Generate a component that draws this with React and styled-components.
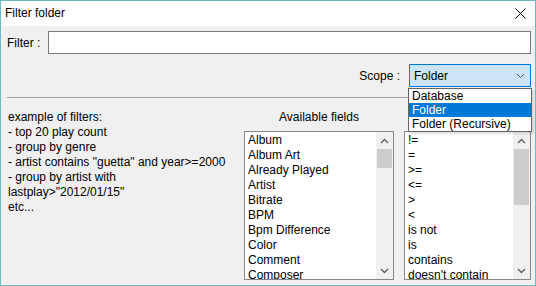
import styled, { createGlobalStyle } from 'styled-components';

const GlobalStyle = createGlobalStyle`
  html, body {
    margin: 0;
    padding: 0;
    background: #f0f0f0;
  }
  body {
    font-family: 'Liberation Sans', Arial, sans-serif;
    font-size: 12px;
    color: #000;
  }
`;

const Window = styled.div`
  width: 536px;
  height: 286px;
  box-sizing: border-box;
  border: 1px solid #6fb9c6;
  display: flex;
  flex-direction: column;
  background: #f0f0f0;
`;

const TitleBar = styled.div`
  height: 25px;
  flex: none;
  background: #fff;
  display: flex;
  align-items: center;
  justify-content: space-between;
  padding: 0 9px 0 4px;
  line-height: 15px;
`;

const Body = styled.div`
  flex: 1;
  display: flex;
  flex-direction: column;
  padding: 5px 4px 5px 6px;
  min-height: 0;
`;

const FilterRow = styled.div`
  display: flex;
  align-items: center;
  height: 23px;
`;

const Label = styled.span`
  width: ${(p) => (p.$w ? `${p.$w}px` : 'auto')};
  flex: none;
  white-space: nowrap;
`;

const TextInput = styled.div`
  flex: 1;
  height: 23px;
  box-sizing: border-box;
  border: 1px solid #7a7a7a;
  background: #fff;
`;

const ScopeRow = styled.div`
  display: flex;
  justify-content: flex-end;
  align-items: center;
  gap: 9px;
  margin-top: 10px;
  height: 23px;
`;

const ComboWrap = styled.div`
  position: relative;
  width: 122px;
  height: 23px;
`;

const Combo = styled.div`
  height: 100%;
  box-sizing: border-box;
  border: 1px solid #0078d7;
  background: #cce4f7;
  display: flex;
  align-items: center;
  justify-content: space-between;
  padding: 0 5px 0 4px;
`;

const Popup = styled.div`
  position: absolute;
  top: 24px;
  left: -1px;
  width: 124px;
  box-sizing: border-box;
  border: 1px solid #646464;
  background: #fff;
  box-shadow: 2px 2px 2px rgba(0, 0, 0, 0.12);
  z-index: 2;
`;

const PopupItem = styled.div`
  height: 14px;
  line-height: 14px;
  padding-left: 3px;
  background: ${(p) => (p.$active ? '#0078d7' : 'transparent')};
  color: ${(p) => (p.$active ? '#fff' : '#000')};
`;

const Separator = styled.div`
  height: 1px;
  background: #a0a0a0;
  margin-top: 10px;
  margin-right: 2px;
`;

const Lower = styled.div`
  flex: 1;
  min-height: 0;
  display: grid;
  grid-template-columns: 1fr 150px 127px;
  grid-template-rows: 15px 1fr;
  column-gap: 10px;
  row-gap: 6px;
  padding-top: 12px;
`;

const Examples = styled.div`
  grid-row: 1 / span 2;
  line-height: 15px;
  padding-left: 1px;
`;

const Heading = styled.div`
  text-align: center;
  line-height: 15px;
`;

const ListBox = styled.div`
  grid-row: 2;
  grid-column: ${(p) => p.$col};
  box-sizing: border-box;
  border: 1px solid #828790;
  background: #fff;
  display: flex;
  min-height: 0;
  overflow: hidden;
`;

const Items = styled.div`
  flex: 1;
  padding: 1px 0 0 3px;
  overflow: hidden;
`;

const Item = styled.div`
  height: 15px;
  line-height: 15px;
  white-space: nowrap;
`;

const ScrollBar = styled.div`
  width: 17px;
  flex: none;
  background: #f0f0f0;
  display: flex;
  flex-direction: column;
`;

const Arrow = styled.div`
  height: 17px;
  flex: none;
  display: flex;
  align-items: center;
  justify-content: center;
`;

const Track = styled.div`
  flex: 1;
`;

const Thumb = styled.div`
  height: ${(p) => p.$h}px;
  margin: 0 1px;
  background: #cdcdcd;
`;

const Chevron = ({ up, color = '#606060', w = 1.4 }) => (
  <svg width="9" height="6" viewBox="0 0 9 6">
    <path
      d={up ? 'M1 5 L4.5 1.5 L8 5' : 'M1 1 L4.5 4.5 L8 1'}
      fill="none"
      stroke={color}
      strokeWidth={w}
    />
  </svg>
);

const CloseIcon = () => (
  <svg width="11" height="11" viewBox="0 0 11 11">
    <path d="M0.5 0.5 L10.5 10.5 M10.5 0.5 L0.5 10.5" stroke="#000" strokeWidth="1" />
  </svg>
);

const fields = [
  'Album',
  'Album Art',
  'Already Played',
  'Artist',
  'Bitrate',
  'BPM',
  'Bpm Difference',
  'Color',
  'Comment',
  'Composer',
];

const operators = ['!=', '=', '>=', '<=', '>', '<', 'is not', 'is', 'contains', "doesn't contain"];

const List = ({ col, items, thumb }) => (
  <ListBox $col={col}>
    <Items>
      {items.map((it) => (
        <Item key={it}>{it}</Item>
      ))}
    </Items>
    <ScrollBar>
      <Arrow>
        <Chevron up />
      </Arrow>
      <Track>
        <Thumb $h={thumb} />
      </Track>
      <Arrow>
        <Chevron />
      </Arrow>
    </ScrollBar>
  </ListBox>
);

export default function App() {
  return (
    <>
      <GlobalStyle />
      <Window>
        <TitleBar>
          <span>Filter folder</span>
          <CloseIcon />
        </TitleBar>
        <Body>
          <FilterRow>
            <Label $w={41}>Filter :</Label>
            <TextInput />
          </FilterRow>
          <ScopeRow>
            <Label>Scope :</Label>
            <ComboWrap>
              <Combo>
                <span>Folder</span>
                <Chevron color="#555" w={1} />
              </Combo>
              <Popup>
                <PopupItem>Database</PopupItem>
                <PopupItem $active>Folder</PopupItem>
                <PopupItem>Folder (Recursive)</PopupItem>
              </Popup>
            </ComboWrap>
          </ScopeRow>
          <Separator />
          <Lower>
            <Examples>
              example of filters:
              <br />- top 20 play count
              <br />- group by genre
              <br />- artist contains "guetta" and year&gt;=2000
              <br />- group by artist with
              <br />
              lastplay&gt;"2012/01/15"
              <br />
              etc...
            </Examples>
            <Heading>Available fields</Heading>
            <List col={2} items={fields} thumb={19} />
            <List col={3} items={operators} thumb={56} />
          </Lower>
        </Body>
      </Window>
    </>
  );
}
